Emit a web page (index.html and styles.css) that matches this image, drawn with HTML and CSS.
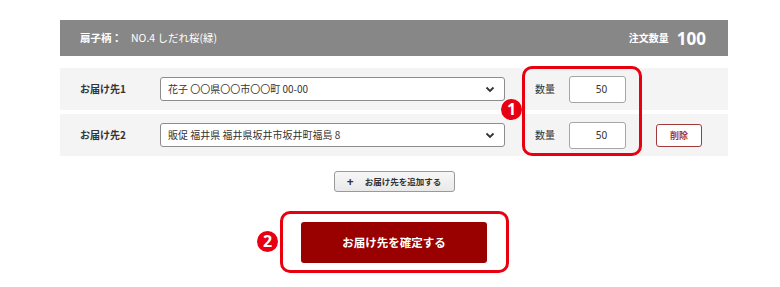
FILE: index.html
```
<!DOCTYPE html>
<html lang="ja">
<head>
<meta charset="utf-8">
<link rel="stylesheet" href="styles.css">
</head>
<body>
<div class="page">
  <div class="header">
    <div class="pattern"><b>扇子柄：</b><span class="pattern-name">NO.4 しだれ桜(緑)</span></div>
    <div class="total"><b class="total-label">注文数量</b><b class="total-num">100</b></div>
  </div>
  <div class="rows">
    <div class="row">
      <div class="label">お届け先1</div>
      <div class="select"><span>花子 〇〇県〇〇市〇〇町 00-00</span>
        <svg class="chev" width="10" height="7" viewBox="0 0 10 7"><path d="M1.5 1.5 L5 5 L8.5 1.5" fill="none" stroke="#333" stroke-width="1.8"/></svg>
      </div>
      <div class="qty-label">数量</div>
      <div class="qty">50</div>
    </div>
    <div class="row">
      <div class="label">お届け先2</div>
      <div class="select"><span>販促 福井県 福井県坂井市坂井町福島 8</span>
        <svg class="chev" width="10" height="7" viewBox="0 0 10 7"><path d="M1.5 1.5 L5 5 L8.5 1.5" fill="none" stroke="#333" stroke-width="1.8"/></svg>
      </div>
      <div class="qty-label">数量</div>
      <div class="qty">50</div>
      <div class="delete">削除</div>
    </div>
  </div>
  <div class="actions">
    <div class="add"><span class="plus">+</span>お届け先を追加する</div>
    <div class="confirm">お届け先を確定する</div>
  </div>
  <div class="mark mark1"></div>
  <div class="badge badge1">1</div>
  <div class="mark mark2"></div>
  <div class="badge badge2">2</div>
</div>
</body>
</html>
```
FILE: styles.css
```
* { box-sizing: border-box; }
html, body { height: 100%; }
body {
  margin: 0;
  background: #fff;
  font-family: "Noto Sans CJK JP", "Noto Sans", sans-serif;
  color: #333;
}
.page {
  position: relative;
  width: 668px;
  min-height: 287px;
  margin-left: 60px;
  padding-top: 20px;
}
.header {
  height: 36px;
  background: #878787;
  color: #fff;
  display: flex;
  align-items: center;
  justify-content: space-between;
  padding: 0 22px 0 20px;
  font-size: 10.5px;
  line-height: 1;
}
.pattern b { font-weight: 700; }
.pattern-name { margin-left: 9px; }
.total { display: flex; align-items: center; }
.total-label { font-size: 10px; }
.total-num {
  font-family: "Noto Sans", sans-serif;
  font-size: 17px;
  margin-left: 8px;
  font-weight: 700;
}
.rows {
  margin-top: 12px;
  display: flex;
  flex-direction: column;
  gap: 4px;
}
.row {
  height: 42px;
  background: #f4f4f4;
  display: flex;
  align-items: center;
  padding-left: 20px;
  font-size: 10px;
  line-height: 1;
}
.label {
  width: 80px;
  font-weight: 700;
  color: #333;
}
.select {
  width: 345px;
  height: 24px;
  background: #fff;
  border: 1px solid #8c8c8c;
  border-radius: 3px;
  display: flex;
  align-items: center;
  justify-content: space-between;
  padding: 0 9px 0 7px;
  color: #333;
}
.chev { display: block; }
.qty-label {
  margin-left: 30px;
  width: 34px;
}
.qty {
  width: 57px;
  height: 27px;
  background: #fff;
  border: 1px solid #a6a6a6;
  border-radius: 3px;
  display: flex;
  align-items: center;
  justify-content: center;
  padding-left: 8px;
  font-family: "Noto Sans", sans-serif;
  font-size: 10px;
}
.delete {
  margin-left: 30px;
  width: 46px;
  height: 23px;
  background: #fff;
  border: 1px solid #a33a3a;
  border-radius: 3px;
  color: #a33a3a;
  display: flex;
  align-items: center;
  justify-content: center;
  font-size: 9px;
  font-weight: 700;
}
.actions {
  display: flex;
  flex-direction: column;
  align-items: center;
}
.add {
  margin-top: 15px;
  width: 121px;
  height: 21px;
  border: 1px solid #9a9a9a;
  border-radius: 3px;
  background: linear-gradient(#f7f7f7, #e9e9e9);
  display: flex;
  align-items: center;
  justify-content: center;
  font-size: 8.5px;
  font-weight: 700;
  color: #333;
  line-height: 1;
}
.plus {
  font-family: "Noto Sans", sans-serif;
  font-size: 12px;
  font-weight: 700;
  margin-right: 11px;
}
.confirm {
  margin-top: 30px;
  width: 186px;
  height: 41px;
  background: #990000;
  border-radius: 3px;
  color: #fff;
  font-size: 11.5px;
  font-weight: 700;
  display: flex;
  align-items: center;
  justify-content: center;
  line-height: 1;
}
.mark {
  position: absolute;
  border: 3px solid #e8000f;
  border-radius: 10px;
}
.mark1 { left: 462px; top: 66px; width: 120px; height: 90px; }
.mark2 { left: 220px; top: 211px; width: 229px; height: 62px; }
.badge {
  position: absolute;
  width: 21px;
  height: 21px;
  border-radius: 50%;
  background: #e60012;
  color: #fff;
  font-family: "Noto Sans", sans-serif;
  font-weight: 700;
  font-size: 16px;
  line-height: 21px;
  text-align: center;
}
.badge1 { left: 441px; top: 99px; }
.badge2 { left: 197px; top: 231px; }
```
